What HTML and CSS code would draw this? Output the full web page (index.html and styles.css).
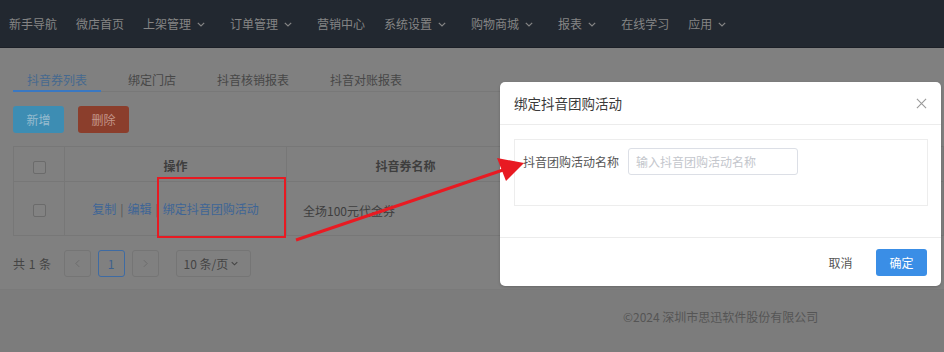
FILE: index.html
```html
<!DOCTYPE html>
<html lang="zh-CN">
<head>
<meta charset="utf-8">
<title>抖音券列表</title>
<link rel="stylesheet" href="styles.css">
</head>
<body>
<header class="topnav">
  <span class="nav-item">新手导航</span>
  <span class="nav-item">微店首页</span>
  <span class="nav-item">上架管理<svg class="caret" viewBox="0 0 8 5"><polyline points="0.8,0.8 4,4 7.2,0.8"/></svg></span>
  <span class="nav-item">订单管理<svg class="caret" viewBox="0 0 8 5"><polyline points="0.8,0.8 4,4 7.2,0.8"/></svg></span>
  <span class="nav-item">营销中心</span>
  <span class="nav-item">系统设置<svg class="caret" viewBox="0 0 8 5"><polyline points="0.8,0.8 4,4 7.2,0.8"/></svg></span>
  <span class="nav-item">购物商城<svg class="caret" viewBox="0 0 8 5"><polyline points="0.8,0.8 4,4 7.2,0.8"/></svg></span>
  <span class="nav-item">报表<svg class="caret" viewBox="0 0 8 5"><polyline points="0.8,0.8 4,4 7.2,0.8"/></svg></span>
  <span class="nav-item">在线学习</span>
  <span class="nav-item">应用<svg class="caret" viewBox="0 0 8 5"><polyline points="0.8,0.8 4,4 7.2,0.8"/></svg></span>
</header>

<main class="card">
  <nav class="tabs">
    <span class="tab active">抖音券列表</span>
    <span class="tab">绑定门店</span>
    <span class="tab">抖音核销报表</span>
    <span class="tab">抖音对账报表</span>
  </nav>

  <div class="toolbar">
    <button class="btn btn-add">新增</button>
    <button class="btn btn-del">删除</button>
  </div>

  <table class="grid">
    <colgroup>
      <col class="c-check"><col class="c-op"><col class="c-name"><col class="c-a"><col class="c-b">
    </colgroup>
    <thead>
      <tr>
        <th><span class="checkbox"></span></th>
        <th>操作</th>
        <th>抖音券名称</th>
        <th>券类型</th>
        <th>状态</th>
      </tr>
    </thead>
    <tbody>
      <tr>
        <td class="center"><span class="checkbox"></span></td>
        <td class="center ops"><a>复制</a><i class="sep">|</i><a>编辑</a><i class="sep">|</i><a>绑定抖音团购活动</a></td>
        <td class="name">全场100元代金券</td>
        <td></td>
        <td></td>
      </tr>
    </tbody>
  </table>

  <div class="pager">
    <span class="total">共 1 条</span>
    <span class="pg-btn"><svg viewBox="0 0 6 10"><polyline points="5,1 1,5 5,9"/></svg></span>
    <span class="pg-btn current">1</span>
    <span class="pg-btn"><svg viewBox="0 0 6 10"><polyline points="1,1 5,5 1,9"/></svg></span>
    <span class="pg-size">10 条/页<svg viewBox="0 0 8 5"><polyline points="0.8,0.8 4,4 7.2,0.8"/></svg></span>
  </div>
</main>

<footer class="copyright">©2024 深圳市思迅软件股份有限公司</footer>

<div class="dialog">
  <div class="dialog-head">
    <span class="dialog-title">绑定抖音团购活动</span>
    <svg class="close" viewBox="0 0 12 12"><path d="M1 1 L11 11 M11 1 L1 11"/></svg>
  </div>
  <div class="dialog-body">
    <div class="form-box">
      <label class="form-label">抖音团购活动名称</label>
      <input class="form-input" type="text" placeholder="输入抖音团购活动名称">
    </div>
  </div>
  <div class="dialog-foot">
    <button class="btn btn-text">取消</button>
    <button class="btn btn-primary">确定</button>
  </div>
</div>

<div class="mark-box"></div>
<svg class="mark-arrow" viewBox="0 0 944 352" width="944" height="352">
  <line x1="296" y1="240" x2="506" y2="169" />
  <polygon points="524,163 497,158 506,181" />
</svg>
</body>
</html>
```

FILE: styles.css
```css
* { box-sizing: border-box; }

html, body {
  margin: 0;
  padding: 0;
}

body {
  width: 944px;
  height: 352px;
  overflow: hidden;
  background: #7c7c7c;
  font-family: "Noto Sans CJK SC", "Liberation Sans", sans-serif;
  font-size: 12px;
  color: #444;
  position: relative;
}

/* top navigation */
.topnav {
  height: 48px;
  background: #222830;
  display: flex;
  align-items: center;
  padding-left: 9px;
  border-bottom: 1px solid #1c2027;
}

.nav-item {
  color: #858585;
  font-size: 12px;
  line-height: 16px;
  margin-right: 19px;
  display: inline-flex;
  align-items: center;
  white-space: nowrap;
}

.caret {
  width: 8px;
  height: 5px;
  margin: 1px 6px 0 6px;
  fill: none;
  stroke: #858585;
  stroke-width: 1.2;
}

/* main card */
.card {
  background: #808080;
  padding: 20px 0 12px 13px;
  border-bottom: 1px solid #7a7a7a;
}

.tabs {
  display: flex;
  gap: 13px;
  border-bottom: 1px solid #787878;
  width: 520px;
}

.tab {
  padding: 0 14px;
  height: 24px;
  line-height: 24px;
  color: #474747;
  font-size: 12px;
  border-bottom: 2px solid transparent;
  margin-bottom: -1px;
}

.tab.active {
  color: #46698f;
  border-bottom-color: #3a78c2;
}

.toolbar {
  display: flex;
  gap: 14px;
  margin-top: 14px;
}

.btn {
  font-family: inherit;
  font-size: 12px;
  height: 27px;
  width: 51px;
  border: 0;
  border-radius: 3px;
  padding: 0;
  cursor: pointer;
}

.btn-add {
  background: #3d8db3;
  color: #97bccf;
}

.btn-del {
  background: #8b3e2c;
  color: #c4968a;
}

/* table */
.grid {
  margin-top: 13px;
  border-collapse: collapse;
  width: 930px;
  table-layout: fixed;
  border: 1px solid #777;
}

.c-check { width: 51px; }
.c-op { width: 222px; }
.c-name { width: 238px; }
.c-a { width: 220px; }
.c-b { width: 199px; }

.grid th, .grid td {
  border: 1px solid #777;
  padding: 0;
}

.grid th {
  height: 35px;
  font-weight: bold;
  color: #3e3e3e;
  text-align: center;
  padding-top: 2px;
}

.grid td {
  height: 54px;
  color: #3e3e3e;
}

.grid td.center { text-align: center; }

.grid td.name { padding-left: 16px; padding-top: 3px; }

.checkbox {
  display: inline-block;
  width: 13px;
  height: 13px;
  border: 1px solid #6b6b6b;
  border-radius: 2px;
  background: #828282;
  vertical-align: middle;
}

.ops a {
  color: #3e6596;
}

.sep {
  font-style: normal;
  color: #555;
  margin: 0 4px;
}

/* pager */
.pager {
  display: flex;
  align-items: center;
  margin-top: 14px;
}

.total {
  color: #444;
  margin-right: 12px;
  letter-spacing: 0.5px;
}

.pg-btn {
  width: 27px;
  height: 27px;
  border: 1px solid #757575;
  border-radius: 3px;
  display: inline-flex;
  align-items: center;
  justify-content: center;
  margin-right: 7px;
  color: #3e618c;
  font-size: 12px;
}

.pg-btn svg {
  width: 5px;
  height: 9px;
  fill: none;
  stroke: #6a6a6a;
  stroke-width: 1.1;
}

.pg-btn.current {
  border-color: #3e6ba3;
}

.pg-size {
  margin-left: 10px;
  height: 27px;
  width: 75px;
  border: 1px solid #757575;
  border-radius: 3px;
  display: inline-flex;
  align-items: center;
  padding-left: 7px;
  color: #444;
  font-size: 12px;
}

.pg-size svg {
  width: 7px;
  height: 5px;
  margin-left: 3px;
  fill: none;
  stroke: #444;
  stroke-width: 1.2;
}

/* footer */
.copyright {
  padding-left: 623px;
  padding-top: 19px;
  color: #555;
  font-size: 12px;
  line-height: 16px;
}

/* dialog */
.dialog {
  position: absolute;
  left: 500px;
  top: 82px;
  width: 441px;
  height: 204px;
  background: #fff;
  border-radius: 5px;
  box-shadow: 0 1px 3px rgba(0,0,0,0.2);
  display: flex;
  flex-direction: column;
}

.dialog-head {
  height: 43px;
  border-bottom: 1px solid #ececec;
  display: flex;
  align-items: center;
  justify-content: space-between;
  padding: 0 14px 0 14px;
}

.dialog-title {
  font-size: 13.5px;
  color: #3a3a3a;
}

.close {
  width: 11px;
  height: 11px;
  stroke: #9a9a9a;
  stroke-width: 1.2;
  fill: none;
}

.dialog-body {
  padding: 14px 13px 31px 14px;
  border-bottom: 1px solid #ececec;
}

.form-box {
  border: 1px solid #ededed;
  height: 67px;
  padding: 8px 8px;
  display: flex;
  align-items: flex-start;
}

.form-label {
  color: #555;
  font-size: 12px;
  line-height: 27px;
  width: 105px;
  white-space: nowrap;
}

.form-input {
  width: 170px;
  height: 27px;
  border: 1px solid #dcdfe6;
  border-radius: 3px;
  padding: 0 7px;
  font-family: inherit;
  font-size: 12px;
  color: #606266;
  outline: none;
}

.form-input::placeholder {
  color: #c3c6cc;
}

.dialog-foot {
  flex: 1;
  display: flex;
  justify-content: flex-end;
  align-items: center;
  gap: 10px;
  padding-right: 14px;
}

.btn-text {
  background: #fff;
  color: #555;
}

.btn-primary {
  background: #3a8ee6;
  color: #fff;
}

/* annotations */
.mark-box {
  position: absolute;
  left: 157px;
  top: 177px;
  width: 129px;
  height: 61px;
  border: 2px solid #e81a22;
}

.mark-arrow {
  position: absolute;
  left: 0;
  top: 0;
  pointer-events: none;
}

.mark-arrow line {
  stroke: #e81a22;
  stroke-width: 3;
}

.mark-arrow polygon {
  fill: #e81a22;
}
```
